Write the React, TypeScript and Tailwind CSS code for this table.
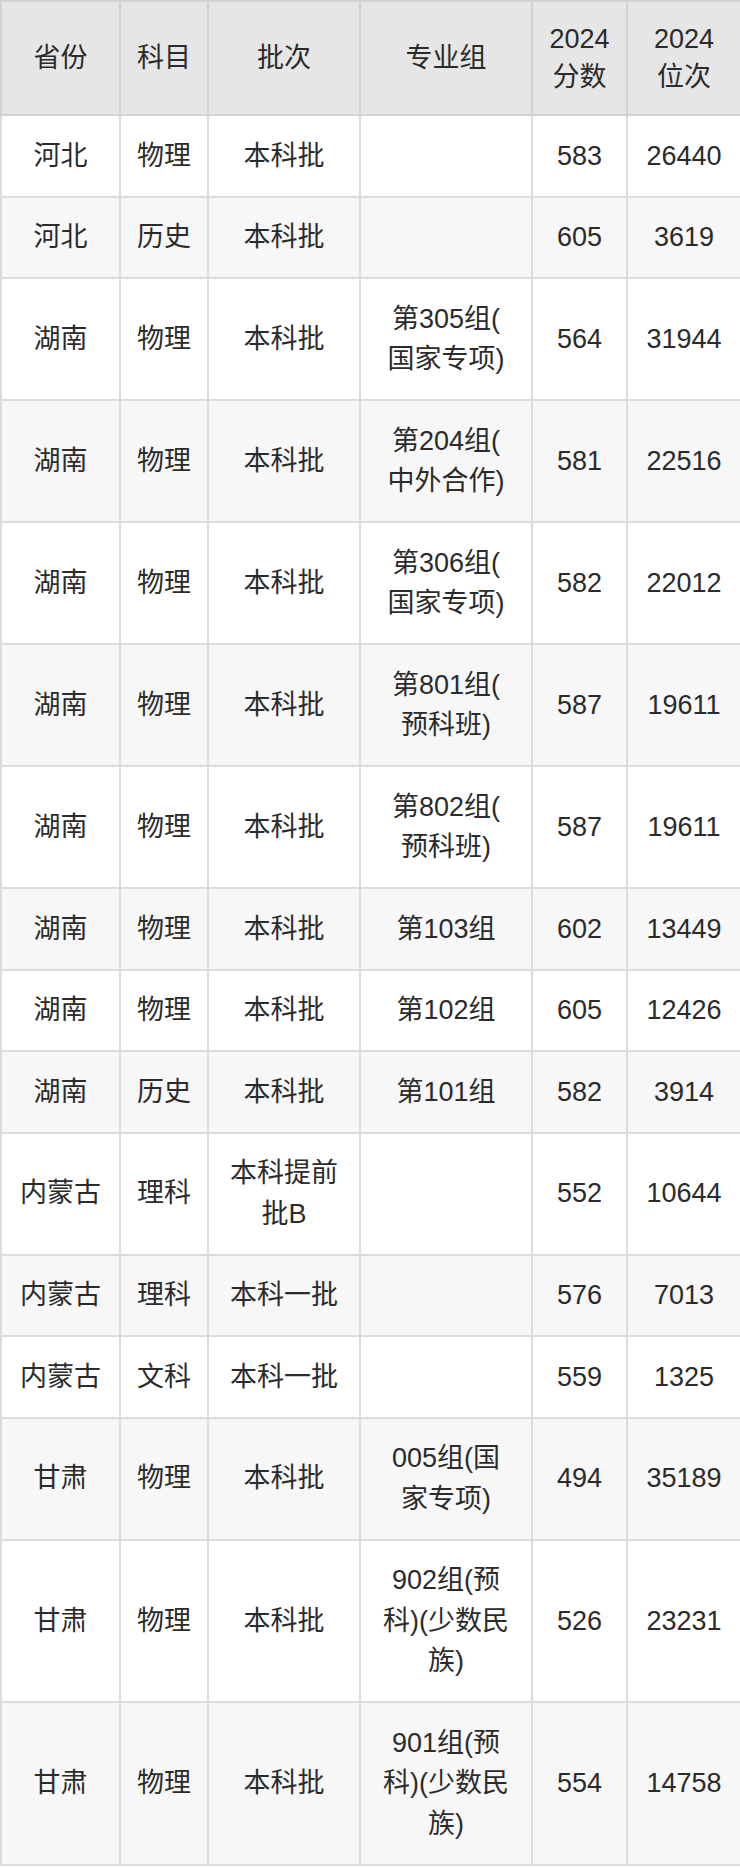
import React from 'react';

interface ScoreRow {
  province: string;
  subject: string;
  batch: string;
  group: string;
  score: string;
  rank: string;
}

const rows: ScoreRow[] = [
  { province: '河北', subject: '物理', batch: '本科批', group: '', score: '583', rank: '26440' },
  { province: '河北', subject: '历史', batch: '本科批', group: '', score: '605', rank: '3619' },
  { province: '湖南', subject: '物理', batch: '本科批', group: '第305组(国家专项)', score: '564', rank: '31944' },
  { province: '湖南', subject: '物理', batch: '本科批', group: '第204组(中外合作)', score: '581', rank: '22516' },
  { province: '湖南', subject: '物理', batch: '本科批', group: '第306组(国家专项)', score: '582', rank: '22012' },
  { province: '湖南', subject: '物理', batch: '本科批', group: '第801组(预科班)', score: '587', rank: '19611' },
  { province: '湖南', subject: '物理', batch: '本科批', group: '第802组(预科班)', score: '587', rank: '19611' },
  { province: '湖南', subject: '物理', batch: '本科批', group: '第103组', score: '602', rank: '13449' },
  { province: '湖南', subject: '物理', batch: '本科批', group: '第102组', score: '605', rank: '12426' },
  { province: '湖南', subject: '历史', batch: '本科批', group: '第101组', score: '582', rank: '3914' },
  { province: '内蒙古', subject: '理科', batch: '本科提前批B', group: '', score: '552', rank: '10644' },
  { province: '内蒙古', subject: '理科', batch: '本科一批', group: '', score: '576', rank: '7013' },
  { province: '内蒙古', subject: '文科', batch: '本科一批', group: '', score: '559', rank: '1325' },
  { province: '甘肃', subject: '物理', batch: '本科批', group: '005组(国家专项)', score: '494', rank: '35189' },
  { province: '甘肃', subject: '物理', batch: '本科批', group: '902组(预科)(少数民族)', score: '526', rank: '23231' },
  { province: '甘肃', subject: '物理', batch: '本科批', group: '901组(预科)(少数民族)', score: '554', rank: '14758' },
];

const headers = ['省份', '科目', '批次', '专业组', '2024分数', '2024位次'];

const App: React.FC = () => {
  const th = 'border-2 border-[#d2d2d2] bg-[#e6e6e6] px-[15px] py-[18px] leading-[38px] font-normal text-center align-middle break-all';
  const td = 'border-2 border-[#dcdcdc] px-[15px] py-[19.5px] leading-[40.5px] text-center align-middle break-all';

  return (
    <div className="w-[740px] bg-white font-['Liberation_Sans','Noto_Sans_CJK_SC',sans-serif] text-[27px] text-[#2b2b2b]">
      <table className="w-[740px] table-fixed border-collapse border-2 border-[#d2d2d2]">
        <colgroup>
          <col className="w-[119px]" />
          <col className="w-[88px]" />
          <col className="w-[152px]" />
          <col className="w-[172px]" />
          <col className="w-[95px]" />
          <col className="w-[114px]" />
        </colgroup>
        <thead>
          <tr>
            {headers.map((h, i) => (
              <th key={h} className={i === 3 ? `${th} !px-[20px]` : th}>
                {h}
              </th>
            ))}
          </tr>
        </thead>
        <tbody>
          {rows.map((r, i) => (
            <tr key={i} className={i % 2 === 1 ? 'bg-[#f7f7f7]' : 'bg-white'}>
              <td className={td}>{r.province}</td>
              <td className={td}>{r.subject}</td>
              <td className={td}>{r.batch}</td>
              {/* group names wrap mid-word, even right after "(" */}
              <td className={`${td} !px-[20px] [line-break:anywhere]`}>{r.group}</td>
              <td className={td}>{r.score}</td>
              <td className={td}>{r.rank}</td>
            </tr>
          ))}
        </tbody>
      </table>
    </div>
  );
};

export default App;
